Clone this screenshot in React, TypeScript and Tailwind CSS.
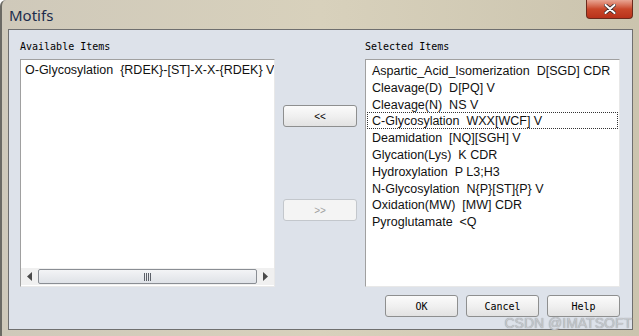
import React from 'react';

const selected = [
  'Aspartic_Acid_Isomerization  D[SGD] CDR',
  'Cleavage(D)  D[PQ] V',
  'Cleavage(N)  NS V',
  'C-Glycosylation  WXX[WCF] V',
  'Deamidation  [NQ][SGH] V',
  'Glycation(Lys)  K CDR',
  'Hydroxylation  P L3;H3',
  'N-Glycosylation  N{P}[ST]{P} V',
  'Oxidation(MW)  [MW] CDR',
  'Pyroglutamate  <Q',
];

const mono = { fontFamily: '"DejaVu Sans Mono", "Liberation Mono", monospace' };
const sans = { fontFamily: 'Tahoma, "Liberation Sans", Arial, sans-serif' };

function Btn({ label, w, disabled, monoFont }: { label: string; w: string; disabled?: boolean; monoFont?: boolean }) {
  return (
    <div
      className={`${w} h-[22px] flex items-center justify-center rounded-[3px] border ${
        disabled
          ? 'border-[#c3c7cc] bg-[#f4f4f4] text-[#a0a0a0]'
          : 'border-[#8e8f8f] bg-gradient-to-b from-[#fbfbfb] via-[#f0f0f0] to-[#e2e2e2] text-black'
      } text-[10px]`}
      style={monoFont ? mono : sans}
    >
      {label}
    </div>
  );
}

export default function App() {
  return (
    <div className="w-[639px] h-[336px] overflow-hidden relative bg-gradient-to-r from-[#cfc9ba] via-[#d8d1bc] to-[#cbc4ae] border-l-2 border-[#6b6a64] rounded-tl-[6px] flex flex-col">
      {/* title bar */}
      <div className="h-[29px] shrink-0 flex items-start justify-between pl-[7px] pr-[6px]">
        <span className="mt-[4px] text-[15px] text-[#1c2c4c]" style={{ fontFamily: '"Noto Sans", "Liberation Sans", sans-serif' }}>
          Motifs
        </span>
        <div className="w-[47px] h-[19px] rounded-b-[4px] border border-t-0 border-[#6b2a1c] bg-gradient-to-b from-[#e8a593] via-[#c9472a] to-[#b8321b] flex items-center justify-center">
          <svg width="12" height="10" viewBox="0 0 12 10">
            <path d="M1.5 1 L10.5 9 M10.5 1 L1.5 9" stroke="#3a2a2a" strokeWidth="3.6" strokeLinecap="round" />
            <path d="M1.5 1 L10.5 9 M10.5 1 L1.5 9" stroke="#ffffff" strokeWidth="2" strokeLinecap="round" />
          </svg>
        </div>
      </div>

      {/* client */}
      <div className="ml-[6px] mr-[6px] h-[301px] border border-[#6f6f6f] bg-[#dde2ea] pl-[11px] pr-[11px] pt-[11px] flex flex-col">
        <div className="flex gap-[8px]">
          {/* left */}
          <div className="w-[255px] flex flex-col">
            <div className="h-[12px] leading-[12px] text-[10px] text-black" style={mono}>Available Items</div>
            <div className="mt-[6px] h-[228px] border border-[#a0a0a0] border-r-[#e8e8e8] border-b-[#e8e8e8] bg-white flex flex-col">
              <div className="flex-1 overflow-hidden pl-[4px] pt-[2px]">
                <div className="h-[17px] leading-[17px] text-[12.5px] text-[#111] whitespace-pre" style={sans}>
                  O-Glycosylation  {'{RDEK}-[ST]-X-X-{RDEK}'} V
                </div>
              </div>
              <div className="h-[17px] mb-[1px] bg-[#f0f0f0] flex items-center">
                <div className="w-[17px] h-full flex items-center justify-center">
                  <svg width="5" height="9" viewBox="0 0 5 9"><path d="M5 0 L0 4.5 L5 9 Z" fill="#4a4a4a" /></svg>
                </div>
                <div className="flex-1 h-[15px] rounded-[2px] border border-[#8a8e94] bg-gradient-to-b from-[#f3f4f6] to-[#dfe2e7] flex items-center justify-center">
                  <svg width="7" height="8" viewBox="0 0 7 8">
                    <path d="M0.5 0 V8 M2.5 0 V8 M4.5 0 V8 M6.5 0 V8" stroke="#5c6068" strokeWidth="1" />
                  </svg>
                </div>
                <div className="w-[17px] h-full flex items-center justify-center">
                  <svg width="5" height="9" viewBox="0 0 5 9"><path d="M0 0 L5 4.5 L0 9 Z" fill="#4a4a4a" /></svg>
                </div>
              </div>
            </div>
          </div>

          {/* middle */}
          <div className="w-[74px] flex flex-col pt-[64px] gap-[72px]">
            <Btn label="<<" w="w-[74px]" />
            <Btn label=">>" w="w-[74px]" disabled />
          </div>

          {/* right */}
          <div className="w-[255px] flex flex-col">
            <div className="h-[12px] leading-[12px] text-[10px] text-black" style={mono}>Selected Items</div>
            <div className="mt-[6px] h-[228px] border border-[#a0a0a0] border-r-[#e8e8e8] border-b-[#e8e8e8] bg-white pt-[2px] px-[1px]">
              {selected.map((s, i) => (
                <div
                  key={s}
                  className={`h-[16.8px] leading-[16px] text-[12.5px] text-[#111] whitespace-pre pl-[4px] border border-dotted ${
                    i === 3 ? 'border-[#333]' : 'border-transparent'
                  }`}
                  style={sans}
                >
                  {s}
                </div>
              ))}
            </div>
          </div>
        </div>

        {/* bottom buttons */}
        <div className="mt-[8px] flex justify-end gap-[8px] pr-[1px]">
          <Btn label="OK" w="w-[73px]" monoFont />
          <Btn label="Cancel" w="w-[73px]" monoFont />
          <Btn label="Help" w="w-[73px]" monoFont />
        </div>
      </div>

      <div
        className="absolute right-[7px] bottom-[2px] text-[14px] text-[#c4c7cc]"
        style={{ fontFamily: '"Liberation Sans", Arial, sans-serif', textShadow: '0 0 1px #8a8d92' }}
      >
        CSDN @IMATSOFT
      </div>
    </div>
  );
}
